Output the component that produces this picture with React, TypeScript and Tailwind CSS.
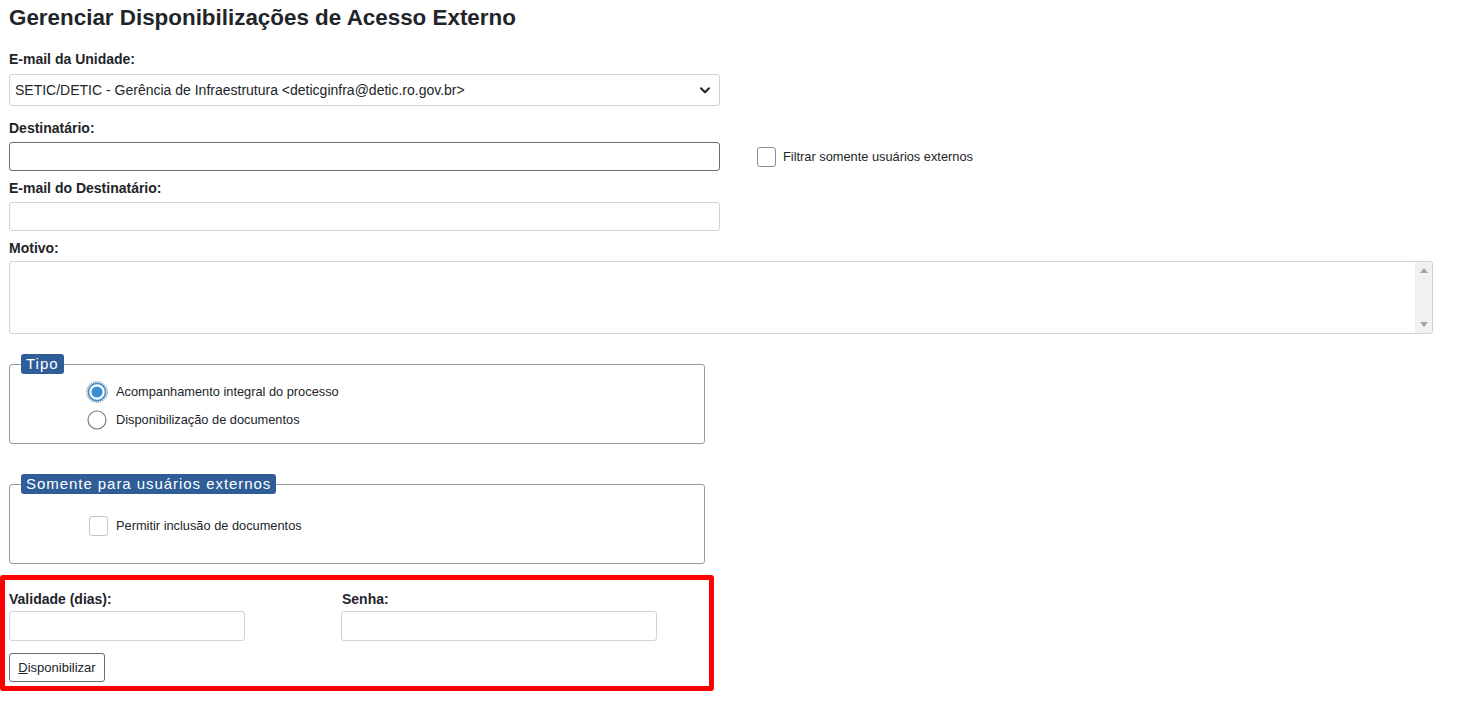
import React from "react";

function Label({ children, className = "" }: { children: React.ReactNode; className?: string }) {
  return <div className={`text-[14px] font-bold leading-[16px] text-[#212529] ${className}`}>{children}</div>;
}

export default function App() {
  return (
    <div className="min-h-[702px] w-full bg-white pl-[9px] font-['Liberation_Sans',Arial,sans-serif] text-[#212529]">
      <h1 className="pt-[5px] text-[22.4px] font-bold leading-[26px] text-[#212529]">
        Gerenciar Disponibilizações de Acesso Externo
      </h1>

      <Label className="mt-[20px]">E-mail da Unidade:</Label>
      <div className="mt-[7px] flex h-[32px] w-[711px] items-center justify-between rounded-[3px] border border-[#ced4da] bg-white pl-[5px] pr-[9px]">
        <span className="text-[14px] text-[#212529]">
          SETIC/DETIC - Gerência de Infraestrutura &lt;deticginfra@detic.ro.gov.br&gt;
        </span>
        <svg width="10" height="7" viewBox="0 0 10 7">
          <path d="M1 1.2 L5 5.2 L9 1.2" fill="none" stroke="#222" strokeWidth="2" strokeLinecap="round" strokeLinejoin="round" />
        </svg>
      </div>

      <Label className="mt-[14px]">Destinatário:</Label>
      <div className="mt-[6px] flex items-center">
        <div className="h-[29px] w-[711px] rounded-[3px] border border-[#6b6b6b] bg-white" />
        <div className="ml-[37px] flex items-center">
          <div className="h-[20px] w-[19px] rounded-[3px] border border-[#8c8c8c] bg-white" />
          <span className="ml-[7px] text-[12.8px] text-[#212529]">Filtrar somente usuários externos</span>
        </div>
      </div>

      <Label className="mt-[9px]">E-mail do Destinatário:</Label>
      <div className="mt-[6px] h-[29px] w-[711px] rounded-[3px] border border-[#ced4da] bg-white" />

      <Label className="mt-[9px]">Motivo:</Label>
      <div className="mt-[5px] flex h-[73px] w-[1424px] rounded-[3px] border border-[#ced4da] bg-white">
        <div className="flex-1" />
        <div className="flex w-[17px] flex-col items-center justify-between bg-[#f1f1f1] py-[6px]">
          <svg width="8" height="5" viewBox="0 0 8 5">
            <path d="M0 5 L4 0 L8 5 Z" fill="#a3a3a3" />
          </svg>
          <svg width="8" height="5" viewBox="0 0 8 5">
            <path d="M0 0 L8 0 L4 5 Z" fill="#a3a3a3" />
          </svg>
        </div>
      </div>

      <fieldset className="mt-[20px] w-[696px] rounded-[3px] border border-[#9a9a9a] px-[11px] pb-[9px]">
        <legend className="rounded-[3px] bg-[#2e5d98] px-[5px] text-[15px] leading-[20px] tracking-[1px] text-white">
          Tipo
        </legend>
        <div className="mt-[4px] pl-[66px]">
          <div className="flex h-[28px] items-center">
            <svg width="22" height="22" viewBox="0 0 22 22" className="-ml-[1px]">
              <circle cx="11" cy="11" r="10.3" fill="none" stroke="#333" strokeWidth="0.8" strokeDasharray="1 1" />
              <circle cx="11" cy="11" r="8.6" fill="#fff" stroke="#3c8dcb" strokeWidth="1.6" />
              <circle cx="11" cy="11" r="5.6" fill="#3c8dcb" />
            </svg>
            <span className="ml-[8px] text-[12.8px] text-[#212529]">Acompanhamento integral do processo</span>
          </div>
          <div className="flex h-[28px] items-center">
            <svg width="22" height="22" viewBox="0 0 22 22" className="-ml-[1px]">
              <circle cx="11" cy="11" r="9" fill="#fff" stroke="#767676" strokeWidth="1.1" />
            </svg>
            <span className="ml-[8px] text-[12.8px] text-[#212529]">Disponibilização de documentos</span>
          </div>
        </div>
      </fieldset>

      <fieldset className="mt-[30px] w-[696px] rounded-[3px] border border-[#9a9a9a] px-[11px] pb-[23px]">
        <legend className="rounded-[3px] bg-[#2e5d98] px-[5px] text-[15px] leading-[20px] tracking-[0.95px] text-white">
          Somente para usuários externos
        </legend>
        <div className="mt-[18px] flex h-[28px] items-center pl-[68px]">
          <div className="h-[20px] w-[19px] rounded-[3px] border border-[#c6c6c6] bg-white" />
          <span className="ml-[8px] text-[12.8px] text-[#212529]">Permitir inclusão de documentos</span>
        </div>
      </fieldset>

      <div className="-ml-[9px] mt-[11px] h-[116px] w-[714px] rounded-[3px] border-[5px] border-[#ff0000] pl-[4px] pt-[11px]">
        <div className="flex">
          <div className="w-[332px]">
            <Label>Validade (dias):</Label>
            <div className="mt-[4px] h-[30px] w-[236px] rounded-[3px] border border-[#ced4da] bg-white" />
          </div>
          <div>
            <Label className="pl-[1px]">Senha:</Label>
            <div className="mt-[4px] h-[30px] w-[316px] rounded-[3px] border border-[#ced4da] bg-white" />
          </div>
        </div>
        <button className="mt-[12px] flex h-[29px] w-[96px] items-center justify-center rounded-[3px] border border-[#6b6b6b] bg-white text-[13px] text-[#212529]">
          <span>
            <span className="underline">D</span>isponibilizar
          </span>
        </button>
      </div>
    </div>
  );
}
